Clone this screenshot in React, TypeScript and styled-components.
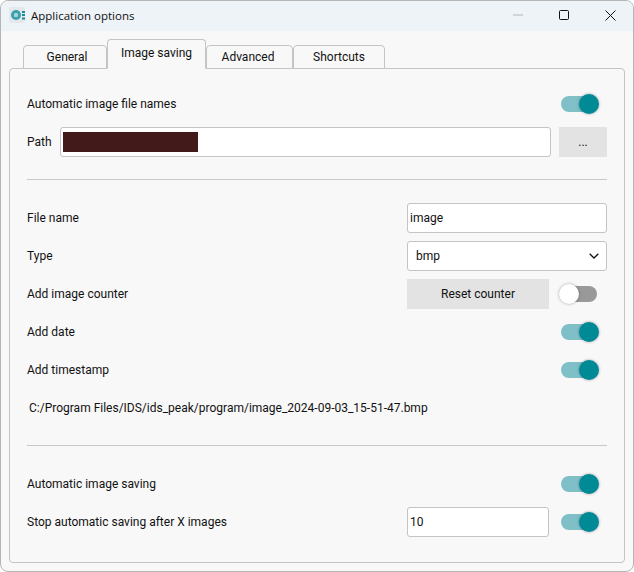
import styled, { createGlobalStyle } from "styled-components";

const GlobalStyle = createGlobalStyle`
  html, body {
    margin: 0;
    padding: 0;
    background: #ffffff;
  }
  * {
    box-sizing: border-box;
  }
`

const Window = styled.div`
  width: 634px;
  height: 572px;
  background: #f8f8f8;
  border: 1px solid #b5b5b5;
  border-radius: 8px;
  overflow: hidden;
  font-family: Roboto, sans-serif;
  font-size: 12px;
  color: #111;
  display: flex;
  flex-direction: column;
`

const TitleBar = styled.div`
  height: 30px;
  flex-shrink: 0;
  background: #eef3f8;
  display: flex;
  align-items: center;
  padding: 0 0 2px 8px;
`

const AppIcon = styled.svg`
  width: 16px;
  height: 16px;
  margin-right: 6px;
`

const Title = styled.span`
  font-family: "Open Sans", sans-serif;
  font-size: 11.5px;
  flex: 1;
`

const WindowButton = styled.div`
  width: 46px;
  height: 100%;
  display: flex;
  align-items: center;
  justify-content: center;
`

const Body = styled.div`
  flex: 1;
  padding: 8px;
  display: flex;
  flex-direction: column;
`

const TabBar = styled.div`
  display: flex;
  align-items: flex-end;
  padding-left: 14px;
  height: 29px;
  flex-shrink: 0;
`

const Tab = styled.div<{ $active?: boolean; $width: number; $inset?: string }>`
  width: ${(p) => p.$width}px;
  height: ${(p) => (p.$active ? 30 : 24)}px;
  margin-bottom: -1px;
  position: relative;
  z-index: ${(p) => (p.$active ? 2 : 1)};
  display: flex;
  align-items: center;
  justify-content: center;
  padding: ${(p) => p.$inset || "0"};
  padding-bottom: ${(p) => (p.$active ? 3 : 0)}px;
  background: #f8f8f8;
  border: 1px solid #c4c4c4;
  border-bottom: ${(p) => (p.$active ? "1px solid #f8f8f8" : "1px solid #c4c4c4")};
  border-radius: 4px 4px 0 0;
`

const Panel = styled.div`
  flex: 1;
  border: 1px solid #c4c4c4;
  border-radius: 4px;
  padding: 20px 17px 0 17px;
  display: flex;
  flex-direction: column;
`

const Section = styled.div`
  display: flex;
  flex-direction: column;
  gap: 8px;
`

const Divider = styled.div<{ $before: number; $after: number }>`
  height: 1px;
  background: #c8c8c8;
  margin: ${(p) => p.$before}px 0 ${(p) => p.$after}px;
`

const Row = styled.div`
  height: 30px;
  display: flex;
  align-items: center;
  justify-content: space-between;
`

const Label = styled.span`
  white-space: nowrap;
`

const PathLabel = styled(Label)`
  width: 33px;
  flex-shrink: 0;
`

const Controls = styled.div`
  width: 200px;
  display: flex;
  align-items: center;
  justify-content: space-between;
`

const Field = styled.div<{ $width?: number }>`
  width: ${(p) => (p.$width ? `${p.$width}px` : "100%")};
  height: 30px;
  background: #fff;
  border: 1px solid #c4c4c4;
  border-radius: 3px;
  display: flex;
  align-items: center;
  padding: 0 2px;
`

const TextInput = styled.input`
  width: 100%;
  border: 0;
  outline: 0;
  padding: 0;
  background: transparent;
  font-family: Roboto, sans-serif;
  font-size: 12px;
  color: #111;
`

const PathField = styled(Field)`
  flex: 1;
`

const Redacted = styled.div`
  width: 135px;
  height: 20px;
  background: #431a1a;
`

const SelectBox = styled(Field)`
  padding: 0 7px 0 8px;
  justify-content: space-between;
`

const FlatButton = styled.button<{ $width: number }>`
  width: ${(p) => p.$width}px;
  height: 30px;
  flex-shrink: 0;
  border: 0;
  padding: 0;
  background: #e3e3e3;
  font-family: Roboto, sans-serif;
  font-size: 12px;
  color: #111;
`

const BrowseButton = styled(FlatButton)`
  margin-left: 8px;
`

const ToggleTrack = styled.div<{ $on: boolean }>`
  width: 36px;
  height: 16px;
  margin-right: 10px;
  border-radius: 8px;
  flex-shrink: 0;
  background: ${(p) => (p.$on ? "#7fc0c8" : "#999999")};
  display: flex;
  align-items: center;
  justify-content: ${(p) => (p.$on ? "flex-end" : "flex-start")};
`

const ToggleKnob = styled.div<{ $on: boolean }>`
  width: 20px;
  height: 20px;
  border-radius: 50%;
  margin: ${(p) => (p.$on ? "0 -2px 0 0" : "0 0 0 -2px")};
  flex-shrink: 0;
  background: ${(p) => (p.$on ? "#008a96" : "#ffffff")};
  box-shadow: 0 0 3px rgba(0, 0, 0, 0.35);
`

const PreviewPath = styled(Row)`
  padding-left: 2px;
`

const Toggle = ({ on = true }: { on?: boolean }) => (
  <ToggleTrack $on={on}>
    <ToggleKnob $on={on} />
  </ToggleTrack>
)

const tabs = [
  { name: "General", width: 84, inset: "0 0 0 4px" },
  { name: "Image saving", width: 99, active: true },
  { name: "Advanced", width: 87, inset: "0 3px 0 0" },
  { name: "Shortcuts", width: 92 },
]

export default function App() {
  return (
    <Window>
      <GlobalStyle />
      <TitleBar>
        <AppIcon viewBox="0 0 16 16">
          <rect x="0" y="0" width="16" height="16" rx="2" fill="#e4e8ea" />
          <circle cx="7" cy="8" r="5" fill="#3a9fae" />
          <circle cx="7" cy="8" r="2.2" fill="#a5d6dc" />
          <rect x="13" y="4" width="3" height="2" fill="#1a8a9a" />
          <rect x="13" y="7" width="3" height="2" fill="#1a8a9a" />
          <rect x="13" y="10.5" width="3" height="2" fill="#1a8a9a" />
        </AppIcon>
        <Title>Application options</Title>
        <WindowButton>
          <svg width="10" height="10" viewBox="0 0 10 10">
            <path d="M0 5h10" stroke="#b4b4b4" strokeWidth="1" />
          </svg>
        </WindowButton>
        <WindowButton>
          <svg width="10" height="10" viewBox="0 0 10 10">
            <rect x="0.5" y="0.5" width="9" height="9" rx="1" fill="none" stroke="#111" strokeWidth="1" />
          </svg>
        </WindowButton>
        <WindowButton>
          <svg width="11" height="11" viewBox="0 0 11 11">
            <path d="M0.5 0.5l10 10M10.5 0.5l-10 10" stroke="#111" strokeWidth="1" />
          </svg>
        </WindowButton>
      </TitleBar>
      <Body>
        <TabBar>
          {tabs.map((tab) => (
            <Tab key={tab.name} $active={tab.active} $width={tab.width} $inset={tab.inset}>
              {tab.name}
            </Tab>
          ))}
        </TabBar>
        <Panel>
          <Section>
            <Row>
              <Label>Automatic image file names</Label>
              <Toggle />
            </Row>
            <Row>
              <PathLabel>Path</PathLabel>
              <PathField>
                <Redacted />
              </PathField>
              <BrowseButton $width={48}>...</BrowseButton>
            </Row>
          </Section>
          <Divider $before={22} $after={23} />
          <Section>
            <Row>
              <Label>File name</Label>
              <Controls>
                <Field>
                  <TextInput defaultValue="image" />
                </Field>
              </Controls>
            </Row>
            <Row>
              <Label>Type</Label>
              <Controls>
                <SelectBox>
                  <span>bmp</span>
                  <svg width="10" height="6" viewBox="0 0 10 6">
                    <path d="M0.7 0.7L5 5l4.3-4.3" fill="none" stroke="#111" strokeWidth="1.3" />
                  </svg>
                </SelectBox>
              </Controls>
            </Row>
            <Row>
              <Label>Add image counter</Label>
              <Controls>
                <FlatButton $width={142}>Reset counter</FlatButton>
                <Toggle on={false} />
              </Controls>
            </Row>
            <Row>
              <Label>Add date</Label>
              <Toggle />
            </Row>
            <Row>
              <Label>Add timestamp</Label>
              <Toggle />
            </Row>
            <PreviewPath>
              <Label>C:/Program Files/IDS/ids_peak/program/image_2024-09-03_15-51-47.bmp</Label>
            </PreviewPath>
          </Section>
          <Divider $before={22} $after={23} />
          <Section>
            <Row>
              <Label>Automatic image saving</Label>
              <Toggle />
            </Row>
            <Row>
              <Label>Stop automatic saving after X images</Label>
              <Controls>
                <Field $width={142}>
                  <TextInput defaultValue="10" />
                </Field>
                <Toggle />
              </Controls>
            </Row>
          </Section>
        </Panel>
      </Body>
    </Window>
  )
}
